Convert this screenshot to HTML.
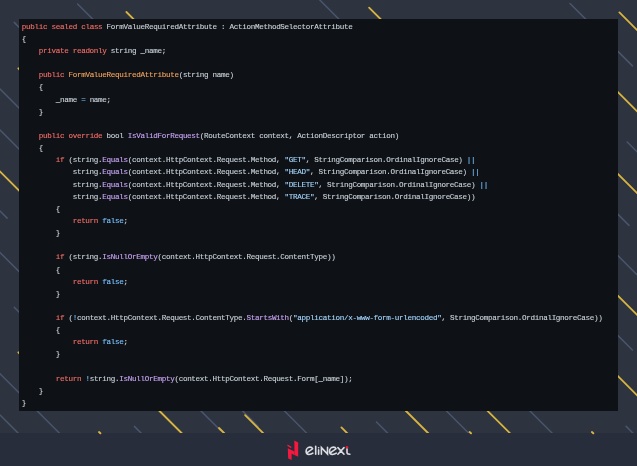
<!DOCTYPE html>
<html><head><meta charset="utf-8">
<style>
html,body{margin:0;padding:0;}
body{width:637px;height:466px;overflow:hidden;position:relative;background:#2d333f;}
svg.bg{position:absolute;left:0;top:0;}
.box{position:absolute;left:19px;top:19px;width:599px;height:392px;background:#0e1216;}
pre{position:absolute;left:2.8px;top:1.7px;margin:0;font-family:"Liberation Mono",monospace;font-size:7.6px;letter-spacing:-0.319px;line-height:12.14px;filter:blur(0.35px);-webkit-text-stroke:0.12px;color:#c9d1d9;white-space:pre;}
.k{color:#f56e68} .f{color:#c8a4f4} .c{color:#79c0ff} .s{color:#a5d6ff} .o{color:#f4a25c}
.foot{position:absolute;left:0;top:433px;width:637px;height:33px;background:#272d3b;}
</style></head><body>
<svg class="bg" width="637" height="466" viewBox="0 0 637 466">
<line x1="77.6" y1="4.0" x2="100" y2="26.4" stroke="#4a566d" stroke-width="1.5" stroke-linecap="round"/>
<line x1="126.4" y1="12.0" x2="140" y2="25.6" stroke="#d8b440" stroke-width="1.8" stroke-linecap="round"/>
<line x1="310" y1="-9.8" x2="345" y2="25.2" stroke="#4a566d" stroke-width="1.5" stroke-linecap="round"/>
<line x1="369.1" y1="7.6" x2="385" y2="23.5" stroke="#d8b440" stroke-width="1.8" stroke-linecap="round"/>
<line x1="570" y1="3.5" x2="632.4" y2="65.9" stroke="#4a566d" stroke-width="1.5" stroke-linecap="round"/>
<line x1="619.4" y1="12.4" x2="660" y2="53.0" stroke="#d8b440" stroke-width="1.8" stroke-linecap="round"/>
<line x1="600" y1="74.2" x2="660" y2="134.2" stroke="#d8b440" stroke-width="1.8" stroke-linecap="round"/>
<line x1="627.2" y1="142.0" x2="660" y2="174.8" stroke="#4a566d" stroke-width="1.5" stroke-linecap="round"/>
<line x1="600" y1="156.1" x2="660" y2="216.1" stroke="#d8b440" stroke-width="1.8" stroke-linecap="round"/>
<line x1="600" y1="196.4" x2="629" y2="225.4" stroke="#4a566d" stroke-width="1.5" stroke-linecap="round"/>
<line x1="600" y1="237.7" x2="660" y2="297.7" stroke="#4a566d" stroke-width="1.5" stroke-linecap="round"/>
<line x1="600" y1="277.8" x2="660" y2="337.8" stroke="#d8b440" stroke-width="1.8" stroke-linecap="round"/>
<line x1="600" y1="317.6" x2="632.4" y2="350.0" stroke="#4a566d" stroke-width="1.5" stroke-linecap="round"/>
<line x1="600" y1="358.2" x2="660" y2="418.2" stroke="#d8b440" stroke-width="1.8" stroke-linecap="round"/>
<line x1="626.2" y1="426.4" x2="640" y2="440.2" stroke="#4a566d" stroke-width="1.5" stroke-linecap="round"/>
<line x1="14.2" y1="22.4" x2="30" y2="38.2" stroke="#4a566d" stroke-width="1.5" stroke-linecap="round"/>
<line x1="18.3" y1="68.3" x2="30" y2="80.0" stroke="#d8b440" stroke-width="1.8" stroke-linecap="round"/>
<line x1="-10" y1="79.0" x2="30" y2="119.0" stroke="#4a566d" stroke-width="1.5" stroke-linecap="round"/>
<line x1="-10" y1="120.0" x2="30" y2="160.0" stroke="#4a566d" stroke-width="1.5" stroke-linecap="round"/>
<line x1="-10" y1="161.5" x2="30" y2="201.5" stroke="#d8b440" stroke-width="1.8" stroke-linecap="round"/>
<line x1="-10" y1="201.0" x2="7.1" y2="218.1" stroke="#4a566d" stroke-width="1.5" stroke-linecap="round"/>
<line x1="-10" y1="242.5" x2="30" y2="282.5" stroke="#4a566d" stroke-width="1.5" stroke-linecap="round"/>
<line x1="14.2" y1="307.2" x2="30" y2="323.0" stroke="#4a566d" stroke-width="1.5" stroke-linecap="round"/>
<line x1="18.3" y1="352.3" x2="30" y2="364.0" stroke="#d8b440" stroke-width="1.8" stroke-linecap="round"/>
<line x1="-10" y1="363.7" x2="70" y2="443.7" stroke="#4a566d" stroke-width="1.5" stroke-linecap="round"/>
<line x1="-10" y1="405.0" x2="30" y2="445.0" stroke="#4a566d" stroke-width="1.5" stroke-linecap="round"/>
<line x1="134.4" y1="426.4" x2="150" y2="442.0" stroke="#4a566d" stroke-width="1.5" stroke-linecap="round"/>
<line x1="140" y1="391.5" x2="190" y2="441.5" stroke="#d8b440" stroke-width="1.8" stroke-linecap="round"/>
<line x1="190" y1="400.0" x2="220.3" y2="430.3" stroke="#4a566d" stroke-width="1.5" stroke-linecap="round"/>
<line x1="219" y1="428.0" x2="235" y2="444.0" stroke="#d8b440" stroke-width="1.8" stroke-linecap="round"/>
<line x1="230" y1="398.4" x2="258" y2="426.4" stroke="#4a566d" stroke-width="1.5" stroke-linecap="round"/>
<line x1="245.1" y1="415.1" x2="275" y2="445.0" stroke="#d8b440" stroke-width="1.8" stroke-linecap="round"/>
<line x1="270" y1="396.5" x2="320" y2="446.5" stroke="#4a566d" stroke-width="1.5" stroke-linecap="round"/>
<line x1="341.4" y1="427.4" x2="355" y2="441.0" stroke="#d8b440" stroke-width="1.8" stroke-linecap="round"/>
<line x1="376.5" y1="422.0" x2="395" y2="440.5" stroke="#4a566d" stroke-width="1.5" stroke-linecap="round"/>
<line x1="390" y1="395.0" x2="440" y2="445.0" stroke="#d8b440" stroke-width="1.8" stroke-linecap="round"/>
<line x1="430" y1="394.5" x2="469" y2="433.5" stroke="#4a566d" stroke-width="1.5" stroke-linecap="round"/>
<line x1="470" y1="393.3" x2="520" y2="443.3" stroke="#d8b440" stroke-width="1.8" stroke-linecap="round"/>
<line x1="510" y1="391.0" x2="560" y2="441.0" stroke="#4a566d" stroke-width="1.5" stroke-linecap="round"/>
</svg>
<div class="box"><pre><span class="k">public</span> <span class="k">sealed</span> <span class="k">class</span> FormValueRequiredAttribute : ActionMethodSelectorAttribute
{
    <span class="k">private</span> <span class="k">readonly</span> string _name;

    <span class="k">public</span> <span class="o">FormValueRequiredAttribute</span>(string name)
    {
        _name <span class="c">=</span> name;
    }

    <span class="k">public</span> <span class="k">override</span> bool <span class="f">IsValidForRequest</span>(RouteContext context, ActionDescriptor action)
    {
        <span class="k">if</span> (string.<span class="f">Equals</span>(context.HttpContext.Request.Method, <span class="s">&quot;GET&quot;</span>, StringComparison.OrdinalIgnoreCase) <span class="c">||</span>
            string.<span class="f">Equals</span>(context.HttpContext.Request.Method, <span class="s">&quot;HEAD&quot;</span>, StringComparison.OrdinalIgnoreCase) <span class="c">||</span>
            string.<span class="f">Equals</span>(context.HttpContext.Request.Method, <span class="s">&quot;DELETE&quot;</span>, StringComparison.OrdinalIgnoreCase) <span class="c">||</span>
            string.<span class="f">Equals</span>(context.HttpContext.Request.Method, <span class="s">&quot;TRACE&quot;</span>, StringComparison.OrdinalIgnoreCase))
        {
            <span class="k">return</span> <span class="c">false</span>;
        }

        <span class="k">if</span> (string.<span class="f">IsNullOrEmpty</span>(context.HttpContext.Request.ContentType))
        {
            <span class="k">return</span> <span class="c">false</span>;
        }

        <span class="k">if</span> (<span class="c">!</span>context.HttpContext.Request.ContentType.<span class="f">StartsWith</span>(<span class="s">&quot;application/x-www-form-urlencoded&quot;</span>, StringComparison.OrdinalIgnoreCase))
        {
            <span class="k">return</span> <span class="c">false</span>;
        }

        <span class="k">return</span> <span class="c">!</span>string.<span class="f">IsNullOrEmpty</span>(context.HttpContext.Request.Form[_name]);
    }
}</pre></div>
<div class="foot">
<svg width="637" height="33" viewBox="0 433 637 33" style="position:absolute;left:0;top:0">
<polygon points="287.6,444.6 291.4,446.8 291.2,448.2 287.4,446" fill="#f5193f"/>
<polygon points="287.8,448.2 294.5,451.6 294.5,455.2 291.6,453.6 291.6,460 288.2,458.4" fill="#f5193f"/>
<polygon points="294.3,440.4 298.2,442.4 298.2,456.8 294.5,455" fill="#f5193f"/>
<g fill="none" stroke="#dcdde2" stroke-width="1.6" stroke-linecap="round">
<path d="M307.2,452.6 L312.6,448.8 C312.2,447.6 311.2,447.1 310,447.1 C307.6,447.1 306.1,449.2 306.1,451.3 C306.1,453.3 307.3,454.5 309,454.5 C310.6,454.5 312,453.9 312.9,453.2"/>
<path d="M315.7,446.4 L315.7,454.3"/>
<path d="M318.6,449.9 L318.6,454.3"/>
<path d="M321.4,454.3 L321.4,447.6 L327.5,454.1 L327.5,447.4"/>
<path d="M330.6,452.6 L336,448.8 C335.6,447.6 334.6,447.1 333.4,447.1 C331,447.1 329.5,449.2 329.5,451.3 C329.5,453.3 330.7,454.5 332.4,454.5 C334,454.5 335.4,453.9 336.3,453.2"/>
<path d="M337.9,447.6 L344,454.2 M344,447.6 L337.9,454.2"/>
<path d="M347,448.8 L347,452.6 C347,453.8 347.8,454.3 349.9,454.3"/>
</g>
<circle cx="318.6" cy="447.8" r="0.8" fill="#dcdde2"/>
<circle cx="347" cy="447.2" r="1.3" fill="#f0173c"/>
</svg>
</div>
<svg width="637" height="466" style="position:absolute;left:0;top:0">
<line x1="99" y1="432.1" x2="100.4" y2="433.3" stroke="#d8b440" stroke-width="2" stroke-linecap="round"/>
<line x1="469.6" y1="432.1" x2="471" y2="433.3" stroke="#d8b440" stroke-width="2" stroke-linecap="round"/>
<line x1="591.9" y1="432.1" x2="593.3" y2="433.3" stroke="#d8b440" stroke-width="2" stroke-linecap="round"/>
</svg>
</body></html>
